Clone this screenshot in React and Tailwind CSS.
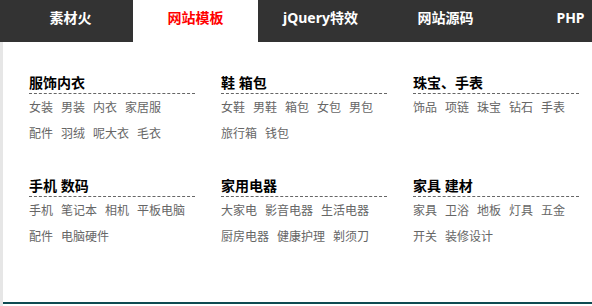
const NAV = [
  { label: '素材火' },
  { label: '网站模板', active: true },
  { label: 'jQuery特效' },
  { label: '网站源码' },
  { label: 'PHP' },
];

const SECTIONS = [
  [
    { title: '服饰内衣', rows: [['女装', '男装', '内衣', '家居服'], ['配件', '羽绒', '呢大衣', '毛衣']] },
    { title: '鞋 箱包', rows: [['女鞋', '男鞋', '箱包', '女包', '男包'], ['旅行箱', '钱包']] },
    { title: '珠宝、手表', rows: [['饰品', '项链', '珠宝', '钻石', '手表']] },
  ],
  [
    { title: '手机 数码', rows: [['手机', '笔记本', '相机', '平板电脑'], ['配件', '电脑硬件']] },
    { title: '家用电器', rows: [['大家电', '影音电器', '生活电器'], ['厨房电器', '健康护理', '剃须刀']] },
    { title: '家具 建材', rows: [['家具', '卫浴', '地板', '灯具', '五金'], ['开关', '装修设计']] },
  ],
];

function Group({ title, rows }) {
  return (
    <div className="w-[166px]">
      <h3 className="text-[14px] leading-[20px] font-bold text-black border-b border-dashed border-[#666]">{title}</h3>
      <div className="pt-[1px]">
        {rows.map((row, i) => (
          <div key={i} className="flex gap-[8px] text-[12px] leading-[26px] text-[#666]">
            {row.map((item) => (
              <a key={item} href="#" className="hover:text-red-600">{item}</a>
            ))}
          </div>
        ))}
      </div>
    </div>
  );
}

export default function App() {
  return (
    <div className="w-[592px] h-[306px] overflow-hidden bg-white font-['Noto_Sans','Noto_Sans_CJK_SC',sans-serif]">
      {/* Top nav */}
      <nav className="h-[42px] bg-[#333] flex pl-[8px]">
        {NAV.map(({ label, active }) => (
          <a
            key={label}
            href="#"
            className={`w-[125px] shrink-0 text-center text-[14px] font-bold leading-[36px] ${
              active ? 'bg-white text-[#f00]' : 'text-white'
            }`}
          >
            {label}
          </a>
        ))}
      </nav>

      {/* Dropdown panel */}
      <div className="flex">
        <div className="w-[3px] h-[264px] bg-[#e6e6e6]" />
        <div className="flex-1 h-[262px] border-b-2 border-[#0e4b52] pl-[26px] pt-[31px] flex flex-col gap-[30px]">
          {SECTIONS.map((groups, i) => (
            <div key={i} className="flex gap-[26px] h-[73px]">
              {groups.map((g) => (
                <Group key={g.title} {...g} />
              ))}
            </div>
          ))}
        </div>
      </div>
    </div>
  );
}
